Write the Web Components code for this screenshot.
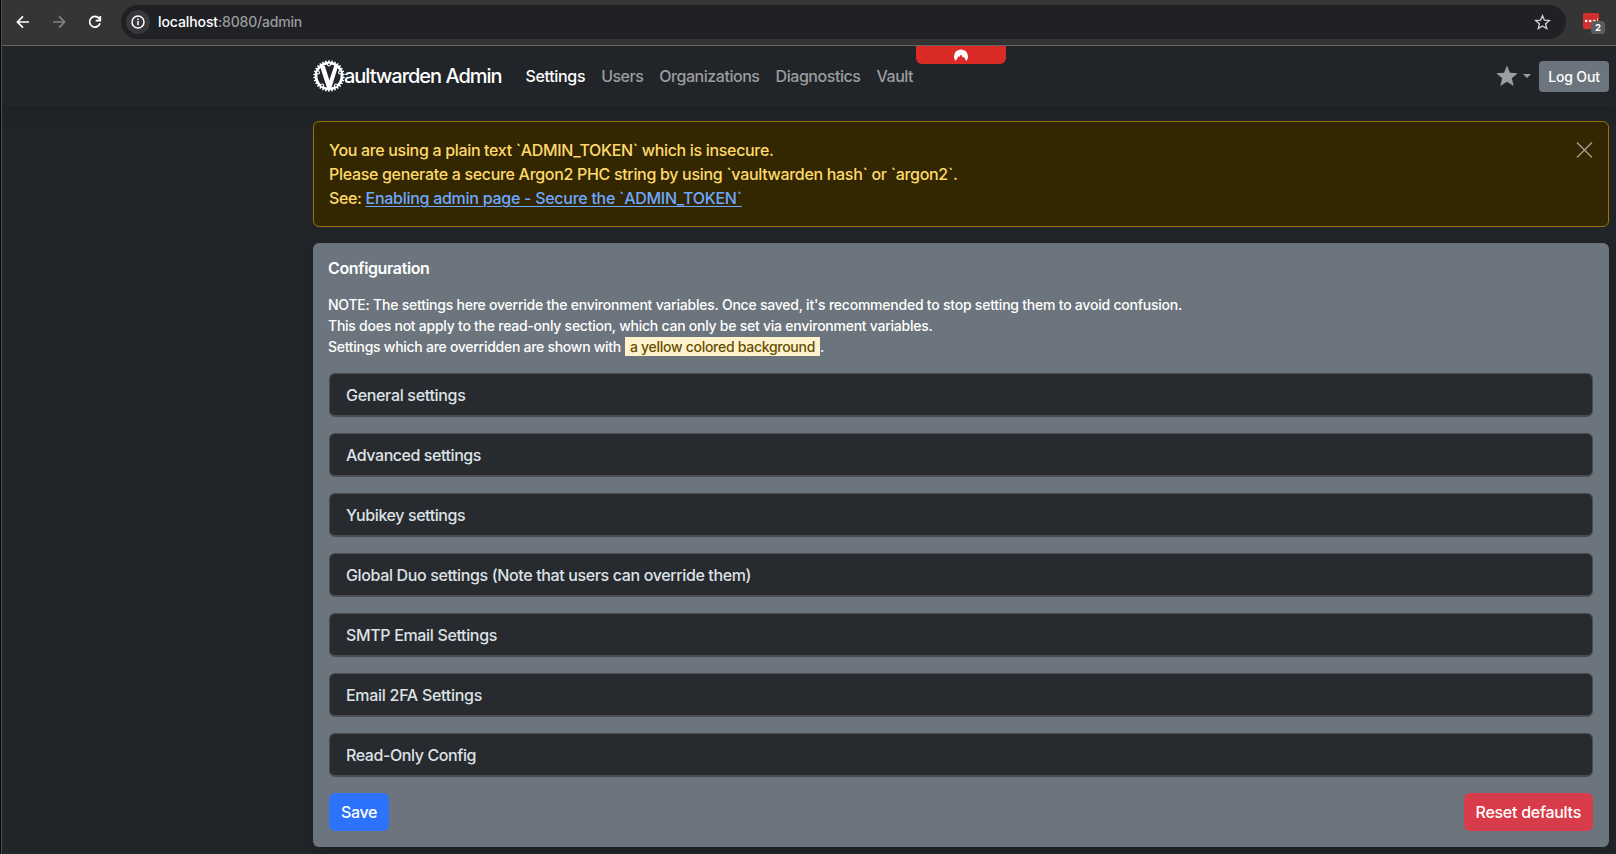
<!DOCTYPE html>
<html lang="en">
<head>
<meta charset="utf-8">
<title>Vaultwarden Admin Panel</title>
<style>
html,body{margin:0;height:100%;background:#212529;overflow:hidden}
body{font-family:Inter,"Liberation Sans",sans-serif;font-size:16px;line-height:24px;font-weight:450;color:#dee2e6}
</style>
</head>
<body>
<admin-window></admin-window>
<script>
const define = (name, html, setup) => customElements.define(name, class extends HTMLElement {
  connectedCallback() {
    if (this.shadowRoot) return;
    const t = document.createElement('template');
    t.innerHTML = html;
    this.attachShadow({mode: 'open'}).append(t.content.cloneNode(true));
    if (setup) setup(this, this.shadowRoot);
  }
});

/* Inline text whose tracking is tuned so that it fills the given advance width. */
define('fit-text', `<style>:host{display:inline-block;white-space:pre}span{display:inline-block}</style><span><slot></slot></span>`, (el, root) => {
  const w = +el.getAttribute('w'), s = root.querySelector('span');
  const n = el.textContent.length;
  s.style.letterSpacing = ((w - s.getBoundingClientRect().width) / n).toFixed(4) + 'px';
});

define('browser-bar', `<style>
:host{display:flex;align-items:center;box-sizing:border-box;height:46px;padding:0 10px 1px 14px;background:#353535;border-bottom:1px solid #646667;color:#fff}
svg{display:block;flex:none}
.back,.fwd,.reload{width:18px;height:18px}
.fwd{margin-left:18px}.reload{margin-left:18px}
.field{display:flex;align-items:center;flex:1;box-sizing:border-box;height:34px;margin-left:17px;margin-right:16px;padding:0 15px 0 5px;background:#202124;border-radius:17px;font-size:14px;line-height:20px}
.info{width:24px;height:24px;margin-right:8px}
.star{margin-left:auto}
.path{color:#9a9b9d}
.ext{width:24px;height:24px}
</style>
<svg class="back" viewBox="0 0 18 18" fill="none" stroke="#fff" stroke-width="1.7"><path d="M15 9H3.6M9 3.4 3.4 9 9 14.6"/></svg>
<svg class="fwd" viewBox="0 0 18 18" fill="none" stroke="#848484" stroke-width="1.7"><path d="M3 9h11.4M9 3.4 14.6 9 9 14.6"/></svg>
<svg class="reload" viewBox="0 0 18 18" fill="none" stroke="#fff" stroke-width="1.7"><path d="M14 10.2A5.3 5.3 0 1 1 13 5.4L14 7M14.3 3v4.6H9.7"/></svg>
<div class="field">
<svg class="info" viewBox="0 0 24 24"><circle cx="12" cy="12" r="12" fill="#37383b"/><circle cx="12" cy="12" r="6" fill="none" stroke="#fff" stroke-width="1.5"/><path d="M12 11v4.2M12 8.4v1.6" stroke="#fff" stroke-width="1.5"/></svg>
<fit-text w="60">localhost</fit-text><fit-text class="path" w="84">:8080/admin</fit-text>
<svg class="star" width="17" height="17" viewBox="0 0 17 17" fill="none" stroke="#d0d1d2" stroke-width="1.4"><path d="m8.500 1.700 1.900 4.500 4.900.4-3.700 3.200 1.100 4.800-4.200-2.600-4.200 2.600 1.100-4.800-3.700-3.200 4.900-.4z"/></svg>
</div>
<svg class="ext" viewBox="0 0 24 24"><rect x="1" y="3" width="16" height="16" rx="1.500" fill="#d32f2f"/><g fill="#fff"><circle cx="4.200" cy="11" r="1.300"/><circle cx="8.200" cy="11" r="1.300"/><circle cx="12.200" cy="11" r="1.300"/><path d="M15 8h.8v6H15z" opacity=".7"/></g><rect x="9" y="11" width="14" height="13.500" rx="3.500" fill="#5a5b5c"/><text x="16" y="21" text-anchor="middle" font-size="9.500" font-weight="700" fill="#fff">2</text></svg>`);

define('vault-logo', `<style>:host{display:block;width:32px;height:32px}svg{display:block}</style>
<svg width="32" height="32" viewBox="-16 -16 32 32"><g class="teeth" fill="#fff"></g><circle r="12.900" fill="none" stroke="#fff" stroke-width="2.600"/><path d="M-9.200-10.300h4.900L.4 4.200 5.200-10.300h4L2.200 12.500h-4z" fill="#fff"/><g fill="#fff"><circle cy="-11.500" r="2"/><circle cx="11" cy="-3.600" r="2"/><circle cx="-11" cy="-3.600" r="2"/><circle cx="6.900" cy="9.400" r="2"/><circle cx="-6.900" cy="9.400" r="2"/></g><g fill="#212529"><circle cy="-11.500" r=".9"/><circle cx="11" cy="-3.600" r=".9"/><circle cx="-11" cy="-3.600" r=".9"/><circle cx="6.900" cy="9.400" r=".9"/><circle cx="-6.900" cy="9.400" r=".9"/></g></svg>`, (el, root) => {
  let s = '';
  for (let i = 0; i < 30; i++) s += `<path transform="rotate(${i * 12})" d="M-1-13.500-.6-15.700H.6L1-13.500z"/>`;
  root.querySelector('.teeth').innerHTML = s;
});

define('nav-bar', `<style>
:host{display:flex;align-items:center;position:relative;box-sizing:border-box;height:60px;padding:0 7px 0 313px;background:#212529;box-shadow:0 8px 16px rgba(0,0,0,.15);color:#9b9d9f}
.brand{color:#fff;font-size:20px;line-height:30px;margin-left:-1px}
nav{display:flex;gap:16px;margin-left:24px}
.on{color:#fff}
.theme{display:flex;align-items:center;margin-left:auto;gap:6px;margin-right:8px}
.theme svg{margin-right:-1px}
.caret{border:4px solid transparent;border-top-color:currentColor;border-bottom:0}
button{width:70px;height:31px;padding:0;border:0;border-radius:4px;background:#6c757d;color:#fff;font:inherit;font-size:14px;line-height:21px;font-weight:500}
.tab{position:absolute;top:0;left:916px;width:90px;height:18px;border-radius:0 0 6px 6px;background:#da2b26;display:flex;justify-content:center}
</style>
<vault-logo></vault-logo><span class="brand"><fit-text w="157.500">aultwarden Admin</fit-text></span>
<nav><fit-text class="on" w="59.700">Settings</fit-text><fit-text w="42">Users</fit-text><fit-text w="100.300">Organizations</fit-text><fit-text w="85">Diagnostics</fit-text><fit-text w="36.500">Vault</fit-text></nav>
<div class="theme"><svg width="22" height="22" viewBox="0 0 22 22" fill="#9b9d9f"><path d="m11 .5 3 7.200 7.700.6-5.900 5 1.900 7.700-6.700-4.200L4.300 21l1.900-7.700-5.900-5L8 7.700z"/></svg><span class="caret"></span></div>
<button><fit-text w="51.500">Log Out</fit-text></button>
<div class="tab"><svg width="16" height="18" viewBox="0 0 16 18"><path d="M2.700 15A7 7 0 1 1 13.300 15L10.900 10.700 9.900 11.800 8 8.300 6.500 11 5.500 10.200z" fill="#fff"/></svg></div>`);

define('warning-alert', `<style>
:host{display:flex;justify-content:space-between;box-sizing:border-box;height:106px;padding:16px 15px;border:1px solid #997404;border-radius:6px;background:#332701;color:#ffda6a}
p{margin:0}
svg{display:block;margin:4px -1px 0 0}
</style><p><slot></slot></p><svg width="18" height="16" viewBox="0 0 18 16"><path d="M1 .5 16 15.500M16 .5 1 15.500" stroke="#a09a84" stroke-width="1.500"/></svg>`);

define('settings-group', `<style>
:host{display:flex;align-items:center;box-sizing:border-box;height:44px;padding:0 16px;border:1px solid #494d50;border-bottom-width:2px;border-radius:6px;background:#272b2f;color:#dee2e6}
</style><slot></slot>`);

define('action-button', `<style>
:host{display:block}
button{height:38px;padding:0 12px;border:0;border-radius:6px;background:var(--fill);color:#fff;font:inherit;font-weight:500}
</style><button><slot></slot></button>`);

define('config-card', `<style>
:host{display:block;box-sizing:border-box;height:604px;padding:13px 16px 0;border-radius:6px;background:#6c757d;box-shadow:0 8px 16px rgba(0,0,0,.15);color:#fff}
h6{margin:0 0 14px -1px;font-size:16px;line-height:24px;font-weight:600}
.note{margin:0 0 16px -1px;font-size:14px;line-height:21px;font-weight:500;height:63px}
mark{display:inline-block;box-sizing:border-box;width:195px;height:19px;line-height:19px;margin-left:4px;padding-left:5px;background:#fff3cd;color:#664d03;vertical-align:baseline}
.list{display:grid;gap:16px;margin-bottom:16px}
.foot{display:flex;justify-content:space-between}
.save{--fill:#2c72fb}.reset{--fill:#d83b49}
</style>
<h6><fit-text w="101.500">Configuration</fit-text></h6>
<div class="note"><div><fit-text w="854">NOTE: The settings here override the environment variables. Once saved, it's recommended to stop setting them to avoid confusion.</fit-text></div><div><fit-text w="604.500">This does not apply to the read-only section, which can only be set via environment variables.</fit-text></div><div><fit-text w="293">Settings which are overridden are shown with</fit-text><mark><fit-text w="185">a yellow colored background</fit-text></mark>.</div></div>
<div class="list">
<settings-group><fit-text w="119.500">General settings</fit-text></settings-group>
<settings-group><fit-text w="135">Advanced settings</fit-text></settings-group>
<settings-group><fit-text w="119.300">Yubikey settings</fit-text></settings-group>
<settings-group><fit-text w="405">Global Duo settings (Note that users can override them)</fit-text></settings-group>
<settings-group><fit-text w="151">SMTP Email Settings</fit-text></settings-group>
<settings-group><fit-text w="136">Email 2FA Settings</fit-text></settings-group>
<settings-group><fit-text w="130">Read-Only Config</fit-text></settings-group>
</div>
<div class="foot"><action-button class="save"><fit-text w="36">Save</fit-text></action-button><action-button class="reset"><fit-text w="105.500">Reset defaults</fit-text></action-button></div>`);

define('admin-window', `<style>
:host{display:block;box-sizing:border-box;height:854px;overflow:hidden;background:#212529}
main{display:grid;gap:16px;padding:15px 7px 0 313px}
.edge{position:absolute;left:0;top:0;width:1px;height:854px;background:#050505;border-right:1px solid #4c4e50}
</style>
<browser-bar></browser-bar><nav-bar></nav-bar>
<main><warning-alert><fit-text w="444.500">You are using a plain text \`ADMIN_TOKEN\` which is insecure.</fit-text><br><fit-text w="628.500">Please generate a secure Argon2 PHC string by using \`vaultwarden hash\` or \`argon2\`.</fit-text><br><fit-text w="36.500">See: </fit-text><fit-text w="376.300" style="color:#6ea8fe"><u style="text-decoration-thickness:1px;text-underline-offset:2px">Enabling admin page - Secure the \`ADMIN_TOKEN\`</u></fit-text></warning-alert><config-card></config-card></main>
<div class="edge"></div>`);
</script>
</body>
</html>
